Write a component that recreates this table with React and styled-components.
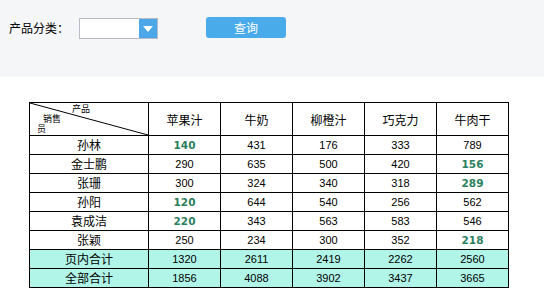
import styled, { createGlobalStyle } from 'styled-components'

const GlobalStyle = createGlobalStyle`
  html, body { margin: 0; padding: 0; background: #fff; }
  body { font-family: "Noto Sans CJK SC", "Liberation Sans", sans-serif; color: #000; }
`

const products = ['苹果汁', '牛奶', '柳橙汁', '巧克力', '牛肉干']

const rows = [
  { name: '孙林', values: [140, 431, 176, 333, 789], hi: [0] },
  { name: '金士鹏', values: [290, 635, 500, 420, 156], hi: [4] },
  { name: '张珊', values: [300, 324, 340, 318, 289], hi: [4] },
  { name: '孙阳', values: [120, 644, 540, 256, 562], hi: [0] },
  { name: '袁成洁', values: [220, 343, 563, 583, 546], hi: [0] },
  { name: '张颖', values: [250, 234, 300, 352, 218], hi: [4] },
]

const totals = [
  { name: '页内合计', values: [1320, 2611, 2419, 2262, 2560] },
  { name: '全部合计', values: [1856, 4088, 3902, 3437, 3665] },
]

const App = () => {
  return <Page>
    <GlobalStyle />
    <Toolbar>
      <Label>产品分类：</Label>
      <Select>
        <SelectField />
        <SelectArrow>
          <svg width="10" height="6" viewBox="0 0 10 6">
            <path d="M0 0 H10 L5 6 Z" fill="#fff" />
          </svg>
        </SelectArrow>
      </Select>
      <QueryButton>查询</QueryButton>
    </Toolbar>
    <Report>
      <colgroup>
        <col style={{ width: 119 }} />
        {products.map(p => <col key={p} style={{ width: 72 }} />)}
      </colgroup>
      <thead>
        <tr>
          <CornerCell>
            <svg width="100%" height="100%" preserveAspectRatio="none" viewBox="0 0 100 100">
              <line x1="0" y1="0" x2="100" y2="100" stroke="#000" strokeWidth="1" vectorEffect="non-scaling-stroke" />
            </svg>
            <CornerTop>产品</CornerTop>
            <CornerBottom>销售<br /><span className="last">员</span></CornerBottom>
          </CornerCell>
          {products.map(p => <HeadCell key={p}>{p}</HeadCell>)}
        </tr>
      </thead>
      <tbody>
        {rows.map(r => <tr key={r.name}>
          <NameCell>{r.name}</NameCell>
          {r.values.map((v, i) => <NumCell key={i} $hi={r.hi.includes(i)}>{v}</NumCell>)}
        </tr>)}
        {totals.map(r => <TotalRow key={r.name}>
          <NameCell>{r.name}</NameCell>
          {r.values.map((v, i) => <NumCell key={i}>{v}</NumCell>)}
        </TotalRow>)}
      </tbody>
    </Report>
  </Page>
}
export default App

const Page = styled.div`
  width: 544px;
  height: 308px;
  overflow: hidden;
`

const Toolbar = styled.div`
  height: 77px;
  background: #f5f6f8;
  display: flex;
  align-items: flex-start;
  padding: 17px 0 0 9px;
  box-sizing: border-box;
`

const Label = styled.span`
  font-size: 12px;
  line-height: 22px;
  width: 70px;
`

const Select = styled.div`
  display: flex;
  width: 79px;
  height: 21px;
  margin-top: 1px;
  border: 1px solid #b9bac8;
  box-sizing: border-box;
  background: #fff;
`

const SelectField = styled.div`
  flex: 1;
`

const SelectArrow = styled.div`
  width: 18px;
  background: #4ba7e7;
  display: flex;
  align-items: center;
  justify-content: center;
  padding-top: 1px;
`

const QueryButton = styled.button`
  margin-left: 48px;
  width: 80px;
  height: 21px;
  border: none;
  border-radius: 3px;
  background: #4aabea;
  color: #fff;
  font-family: "Noto Sans CJK SC", sans-serif;
  font-size: 12px;
  padding: 0;
  line-height: 21px;
`

const Report = styled.table`
  margin: 25px 0 0 29px;
  border-collapse: collapse;
  table-layout: fixed;
  width: 479px;
  td, th {
    border: 1px solid #000;
    padding: 0;
    text-align: center;
  }
`

const HeadCell = styled.th`
  height: 32px;
  font-weight: normal;
  font-size: 12px;
`

const CornerCell = styled.th`
  position: relative;
  height: 32px;
  font-weight: normal;
  svg {
    position: absolute;
    left: 0;
    top: 0;
  }
`

const CornerTop = styled.span`
  position: absolute;
  left: 42px;
  top: 0px;
  font-size: 9px;
  line-height: 11px;
`

const CornerBottom = styled.span`
  position: absolute;
  left: 13px;
  top: 11px;
  font-size: 9px;
  line-height: 10px;
  text-align: left;
  .last { margin-left: -6px; }
`

const NameCell = styled.td`
  height: 18px;
  font-size: 12px;
  line-height: 18px;
`

const NumCell = styled.td`
  height: 18px;
  line-height: 18px;
  font-family: ${p => p.$hi ? '"DejaVu Sans"' : '"Liberation Sans"'}, sans-serif;
  font-size: ${p => p.$hi ? '10.5px' : '11px'};
  font-weight: ${p => p.$hi ? 'bold' : 'normal'};
  color: ${p => p.$hi ? '#2b7f5e' : '#000'};
`

const TotalRow = styled.tr`
  background: #b1f5e9;
`
